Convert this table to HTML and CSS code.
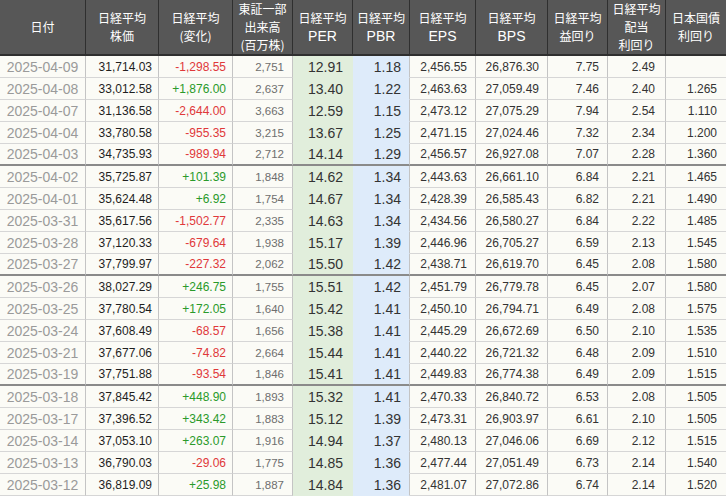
FILE: index.html
```html
<!DOCTYPE html>
<html lang="ja">
<head>
<meta charset="utf-8">
<title>日経平均</title>
<link rel="stylesheet" href="styles.css">
</head>
<body>
<table class="tbl">
<colgroup>
<col class="w1"><col class="w2"><col class="w3"><col class="w4"><col class="w5"><col class="w6"><col class="w7"><col class="w8"><col class="w9"><col class="w10"><col class="w11">
</colgroup>
<thead>
<tr>
<th>日付</th>
<th>日経平均<br>株価</th>
<th>日経平均<br>(変化)</th>
<th>東証一部<br>出来高<br>(百万株)</th>
<th>日経平均<br><span class="lat">PER</span></th>
<th>日経平均<br><span class="lat">PBR</span></th>
<th>日経平均<br><span class="lat">EPS</span></th>
<th>日経平均<br><span class="lat">BPS</span></th>
<th>日経平均<br>益回り</th>
<th>日経平均<br>配当<br>利回り</th>
<th class="last">日本国債<br>利回り</th>
</tr>
</thead>
<tbody>
<tr><td>2025-04-09</td><td>31,714.03</td><td class="dn">-1,298.55</td><td>2,751</td><td>12.91</td><td>1.18</td><td>2,456.55</td><td>26,876.30</td><td>7.75</td><td>2.49</td><td></td></tr>
<tr><td>2025-04-08</td><td>33,012.58</td><td class="up">+1,876.00</td><td>2,637</td><td>13.40</td><td>1.22</td><td>2,463.63</td><td>27,059.49</td><td>7.46</td><td>2.40</td><td>1.265</td></tr>
<tr><td>2025-04-07</td><td>31,136.58</td><td class="dn">-2,644.00</td><td>3,663</td><td>12.59</td><td>1.15</td><td>2,473.12</td><td>27,075.29</td><td>7.94</td><td>2.54</td><td>1.110</td></tr>
<tr><td>2025-04-04</td><td>33,780.58</td><td class="dn">-955.35</td><td>3,215</td><td>13.67</td><td>1.25</td><td>2,471.15</td><td>27,024.46</td><td>7.32</td><td>2.34</td><td>1.200</td></tr>
<tr class="wk"><td>2025-04-03</td><td>34,735.93</td><td class="dn">-989.94</td><td>2,712</td><td>14.14</td><td>1.29</td><td>2,456.57</td><td>26,927.08</td><td>7.07</td><td>2.28</td><td>1.360</td></tr>
<tr><td>2025-04-02</td><td>35,725.87</td><td class="up">+101.39</td><td>1,848</td><td>14.62</td><td>1.34</td><td>2,443.63</td><td>26,661.10</td><td>6.84</td><td>2.21</td><td>1.465</td></tr>
<tr><td>2025-04-01</td><td>35,624.48</td><td class="up">+6.92</td><td>1,754</td><td>14.67</td><td>1.34</td><td>2,428.39</td><td>26,585.43</td><td>6.82</td><td>2.21</td><td>1.490</td></tr>
<tr><td>2025-03-31</td><td>35,617.56</td><td class="dn">-1,502.77</td><td>2,335</td><td>14.63</td><td>1.34</td><td>2,434.56</td><td>26,580.27</td><td>6.84</td><td>2.22</td><td>1.485</td></tr>
<tr><td>2025-03-28</td><td>37,120.33</td><td class="dn">-679.64</td><td>1,938</td><td>15.17</td><td>1.39</td><td>2,446.96</td><td>26,705.27</td><td>6.59</td><td>2.13</td><td>1.545</td></tr>
<tr class="wk"><td>2025-03-27</td><td>37,799.97</td><td class="dn">-227.32</td><td>2,062</td><td>15.50</td><td>1.42</td><td>2,438.71</td><td>26,619.70</td><td>6.45</td><td>2.08</td><td>1.580</td></tr>
<tr><td>2025-03-26</td><td>38,027.29</td><td class="up">+246.75</td><td>1,755</td><td>15.51</td><td>1.42</td><td>2,451.79</td><td>26,779.78</td><td>6.45</td><td>2.07</td><td>1.580</td></tr>
<tr><td>2025-03-25</td><td>37,780.54</td><td class="up">+172.05</td><td>1,640</td><td>15.42</td><td>1.41</td><td>2,450.10</td><td>26,794.71</td><td>6.49</td><td>2.08</td><td>1.575</td></tr>
<tr><td>2025-03-24</td><td>37,608.49</td><td class="dn">-68.57</td><td>1,656</td><td>15.38</td><td>1.41</td><td>2,445.29</td><td>26,672.69</td><td>6.50</td><td>2.10</td><td>1.535</td></tr>
<tr><td>2025-03-21</td><td>37,677.06</td><td class="dn">-74.82</td><td>2,664</td><td>15.44</td><td>1.41</td><td>2,440.22</td><td>26,721.32</td><td>6.48</td><td>2.09</td><td>1.510</td></tr>
<tr class="wk"><td>2025-03-19</td><td>37,751.88</td><td class="dn">-93.54</td><td>1,846</td><td>15.41</td><td>1.41</td><td>2,449.83</td><td>26,774.38</td><td>6.49</td><td>2.09</td><td>1.515</td></tr>
<tr><td>2025-03-18</td><td>37,845.42</td><td class="up">+448.90</td><td>1,893</td><td>15.32</td><td>1.41</td><td>2,470.33</td><td>26,840.72</td><td>6.53</td><td>2.08</td><td>1.505</td></tr>
<tr><td>2025-03-17</td><td>37,396.52</td><td class="up">+343.42</td><td>1,883</td><td>15.12</td><td>1.39</td><td>2,473.31</td><td>26,903.97</td><td>6.61</td><td>2.10</td><td>1.505</td></tr>
<tr><td>2025-03-14</td><td>37,053.10</td><td class="up">+263.07</td><td>1,916</td><td>14.94</td><td>1.37</td><td>2,480.13</td><td>27,046.06</td><td>6.69</td><td>2.12</td><td>1.515</td></tr>
<tr><td>2025-03-13</td><td>36,790.03</td><td class="dn">-29.06</td><td>1,775</td><td>14.85</td><td>1.36</td><td>2,477.44</td><td>27,051.49</td><td>6.73</td><td>2.14</td><td>1.540</td></tr>
<tr><td>2025-03-12</td><td>36,819.09</td><td class="up">+25.98</td><td>1,887</td><td>14.84</td><td>1.36</td><td>2,481.07</td><td>27,072.86</td><td>6.74</td><td>2.14</td><td>1.520</td></tr>
</tbody>
</table>
</body>
</html>
```
FILE: styles.css
```css
html, body {
  margin: 0;
  padding: 0;
  background: #ffffff;
}
.tbl {
  table-layout: fixed;
  width: 726px;
  border-collapse: separate;
  border-spacing: 0;
  font-family: "Liberation Sans", Arial, "Noto Sans CJK JP", sans-serif;
}
.w1 { width: 86px; }
.w2 { width: 73px; }
.w3 { width: 74px; }
.w4 { width: 60px; }
.w5 { width: 60px; }
.w6 { width: 57px; }
.w7 { width: 66px; }
.w8 { width: 72px; }
.w9 { width: 60px; }
.w10 { width: 58px; }
.w11 { width: 60px; }

.tbl thead tr { height: 56px; }
.tbl th {
  background: #575757;
  color: #ffffff;
  font-family: "Noto Sans CJK JP", sans-serif;
  font-weight: normal;
  font-size: 12px;
  line-height: 18px;
  padding: 0;
  text-align: center;
  vertical-align: middle;
  border-right: 1px solid #2f2f2f;
  border-bottom: 2px solid #2f2f2f;
  white-space: nowrap;
  overflow: hidden;
}
.tbl th.last { border-right: none; }
.tbl th .lat {
  font-family: "Liberation Sans", Arial, sans-serif;
  font-size: 14px;
}

.tbl tbody tr { height: 22px; }
.tbl td {
  background: #fbfbf6;
  color: #333333;
  font-size: 12px;
  line-height: 20px;
  padding: 0;
  text-align: right;
  vertical-align: middle;
  border-right: 1px solid #c4c4c4;
  border-bottom: 1px solid #d6d6d6;
  white-space: nowrap;
  overflow: hidden;
}
.tbl td:last-child { border-right: none; padding-right: 9px; }

.tbl td:nth-child(1) {
  text-align: center;
  color: #9a9a9a;
  font-size: 14px;
}
.tbl td:nth-child(2) { padding-right: 6px; color: #1e1e1e; }
.tbl td:nth-child(3) { padding-right: 6px; }
.tbl td:nth-child(4) { padding-right: 8px; color: #6e6e6e; font-size: 11.5px; }
.tbl td:nth-child(5) {
  padding-right: 10px;
  font-size: 14px;
  background: #e1eedc;
  border-bottom-color: #e1eedc;
  border-right: none;
}
.tbl td:nth-child(6) {
  padding-right: 8px;
  font-size: 14px;
  background: #deebfa;
  border-bottom-color: #deebfa;
}
.tbl td:nth-child(7) { padding-right: 8px; }
.tbl td:nth-child(8) { padding-right: 8px; }
.tbl td:nth-child(9) { padding-right: 8px; }
.tbl td:nth-child(10) { padding-right: 10px; }

.tbl td.dn { color: #e0383a; }
.tbl td.up { color: #2a9a2a; }

.tbl tr.wk td,
.tbl tr.wk td:nth-child(5),
.tbl tr.wk td:nth-child(6) {
  border-bottom: 2px solid #8a8a8a;
}
```
